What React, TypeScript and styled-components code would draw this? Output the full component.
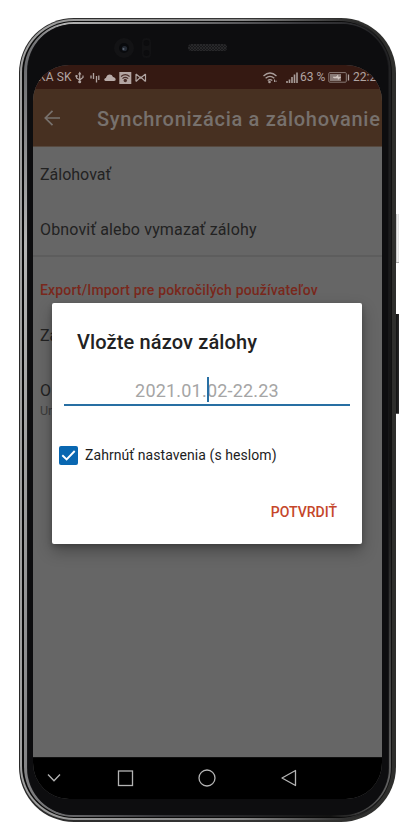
import React from 'react';
import styled, { createGlobalStyle } from 'styled-components';

const GlobalStyle = createGlobalStyle`
  * { box-sizing: border-box; }
  body { margin: 0; background: #fff; font-family: Roboto, sans-serif; }
`;

const Page = styled.main`
  display: flex;
  width: 420px;
  height: 830px;
  padding: 18px 0 0 19px;
  overflow: hidden;
  background: #fff;
`;

const Ring = styled.div<{ $fill: string; $pad: string; $radius: number }>`
  display: flex;
  flex: 1;
  min-width: 0;
  padding: ${(p) => p.$pad};
  border-radius: ${(p) => p.$radius}px;
  background: ${(p) => p.$fill};
`;

const Phone = styled.div`
  display: flex;
  flex: none;
  width: 377px;
  height: 804px;
`;

const SideButtons = styled.div`
  display: flex;
  flex-direction: column;
  gap: 51px;
  width: 3px;
  padding-top: 196px;
`;

const SideButton = styled.div<{ $fill: string; $h: number; $edge: string }>`
  height: ${(p) => p.$h}px;
  background: ${(p) => p.$fill};
  border-bottom: 1px solid ${(p) => p.$edge};
`;

const Face = styled.div`
  display: flex;
  flex-direction: column;
  flex: 1;
  min-width: 0;
  padding: 0 6px 16px 5px;
  border-radius: 46px;
  background: #0d0d0f;
`;

const Bezel = styled.div`
  display: flex;
  height: 41px;
  flex: none;
`;

const Screen = styled.div`
  position: relative;
  display: flex;
  flex-direction: column;
  width: 349px;
  height: 734px;
  border-radius: 36px;
  overflow: hidden;
  background: #666;
`;

const StatusBar = styled.div`
  display: flex;
  flex: none;
  align-items: center;
  height: 24px;
  padding-left: 5px;
  background: #351912;
  color: #b0a4a1;
  font-size: 12px;
  white-space: nowrap;
`;

const StatusText = styled.span<{ $w: number; $ls?: number }>`
  flex: none;
  width: ${(p) => p.$w}px;
  letter-spacing: ${(p) => p.$ls ?? 0}px;
`;

const StatusIcons = styled.svg`
  flex: none;
  display: block;
`;

const AppBar = styled.header`
  display: flex;
  flex: none;
  align-items: center;
  height: 58px;
  padding-left: 8px;
  background: #473021;
  color: #77716d;
  border-bottom: 1px solid #57493f;
`;

const Title = styled.h1`
  margin: 2px 0 0 34px;
  font-size: 20px;
  line-height: 24px;
  font-weight: 500;
  letter-spacing: 0.7px;
  white-space: nowrap;
`;

const Content = styled.section`
  display: flex;
  flex: 1;
  flex-direction: column;
`;

const Item = styled.div<{ $h: number }>`
  flex: none;
  height: ${(p) => p.$h}px;
  padding: 0 7px;
  font-size: 16px;
  line-height: 55px;
  color: #222;
  white-space: nowrap;
`;

const Long = styled.span`
  letter-spacing: 0.15px;
`;

const SectionHead = styled.h2`
  flex: none;
  height: 53px;
  margin: 0;
  padding: 0 7px;
  border-top: 2px solid #5d5d5d;
  font-size: 14px;
  line-height: 67px;
  font-weight: 500;
  letter-spacing: 0.16px;
  color: #79281c;
  white-space: nowrap;
`;

const Hint = styled.div`
  padding: 0 7px;
  font-size: 12.5px;
  line-height: 16px;
  color: #3c3c3c;
`;

const NavBar = styled.nav`
  flex: none;
  height: 42px;
  background: #000;
  border-top: 1px solid #111;
`;

const Dialog = styled.div`
  position: absolute;
  left: 19px;
  top: 238px;
  display: flex;
  flex-direction: column;
  width: 310px;
  height: 241px;
  padding: 26px 12px 0;
  border-radius: 2px;
  background: #fff;
  box-shadow: 0 7px 16px rgba(0, 0, 0, 0.3), 0 2px 5px rgba(0, 0, 0, 0.2);
`;

const DialogTitle = styled.h3`
  margin: 0;
  padding-left: 13px;
  font-size: 20px;
  line-height: 26px;
  font-weight: 500;
  letter-spacing: 0.13px;
  color: #222;
  white-space: nowrap;
`;

const Field = styled.div`
  display: flex;
  justify-content: center;
  height: 36px;
  margin: 15px 0 0;
  width: 286px;
  border-bottom: 2px solid #286fa3;
  font-size: 18px;
  line-height: 41px;
  color: #a5a5a5;
`;

const Placeholder = styled.span`
  position: relative;
  letter-spacing: 0.2px;
  white-space: nowrap;
`;

const Caret = styled.i`
  position: absolute;
  left: 72px;
  top: 7px;
  width: 2px;
  height: 25px;
  background: #286fa3;
`;

const Option = styled.label`
  display: flex;
  align-items: center;
  height: 20px;
  margin: 39px 0 0 -5px;
  gap: 7px;
  font-size: 14px;
  letter-spacing: 0.07px;
  color: #1d1d1d;
  white-space: nowrap;
`;

const CheckBox = styled.span`
  display: flex;
  flex: none;
  width: 19px;
  height: 19px;
  border-radius: 2px;
  background: #0967b1;
`;

const Confirm = styled.button`
  align-self: flex-end;
  margin: 37px 13px 0 0;
  padding: 0;
  border: 0;
  background: none;
  font: 500 14px/20px Roboto, sans-serif;
  color: #c5462a;
`;

function Metal({ children }: { children: React.ReactNode }) {
  return (
    <Ring $fill="linear-gradient(90deg,#292929,#353535 50%,#2e2e2c)" $pad="1px 4px 2px 1px" $radius={55}>
      <Ring $fill="linear-gradient(90deg,#a0a0a0,#888 60%,#111 98%)" $pad="2px 1px 2px 2px" $radius={54}>
        <Ring $fill="#090909" $pad="1px 0 1px 2px" $radius={52}>
          <Ring $fill="linear-gradient(100deg,#55565a,#b4b4b4 8%,#36363a 55%,#111 88%,#6d6d6d 100%)" $pad="2px 2px 2px 3px" $radius={50}>
            <Ring $fill="#161618" $pad="0 1px 0 1px" $radius={47}>{children}</Ring>
          </Ring>
        </Ring>
      </Ring>
    </Ring>
  );
}

export default function App() {
  return (
    <>
      <GlobalStyle />
      <Page>
        <Phone>
          <Metal>
            <Face>
              <Bezel>
                <svg width="349" height="41" viewBox="33 24 349 41">
                  <defs>
                    <pattern id="mesh" width="3" height="3" patternUnits="userSpaceOnUse">
                      <rect width="3" height="3" fill="#18181a" />
                      <path d="M0 0L3 3M3 0L0 3" stroke="#303032" strokeWidth=".6" />
                    </pattern>
                  </defs>
                  <circle cx="124" cy="48" r="10" fill="#131315" />
                  <circle cx="124" cy="48" r="5" fill="#090a0d" />
                  <circle cx="124.5" cy="48.5" r="2.6" fill="#252b35" />
                  <circle cx="123.500" cy="49" r="1" fill="#5c6573" />
                  <rect x="142" y="38" width="9" height="20" rx="4" fill="#121214" />
                  <circle cx="146.500" cy="43" r="3" fill="#0c0c0e" />
                  <circle cx="146.500" cy="53" r="3" fill="#0c0c0e" />
                  <rect x="188" y="44" width="39" height="7" rx="3.500" fill="url(#mesh)" />
                </svg>
              </Bezel>
              <Screen>
                <StatusBar>
                  <StatusText $w={36} $ls={0.15}>KA SK</StatusText>
                  <StatusIcons width="76" height="20" viewBox="74 67 76 20" fill="none" stroke="#b0a4a1">
                    <path d="M79.700 73V82M76.500 76V78L79.700 80L83 77.500V75.500" strokeWidth="1.200" />
                    <path d="M78 74.500L79.700 71.500L81.400 74.500Z" fill="#b0a4a1" stroke="none" />
                    <circle cx="79.700" cy="81.700" r="1.500" fill="#b0a4a1" stroke="none" />
                    <rect x="75.500" y="75" width="2" height="2" fill="#b0a4a1" stroke="none" />
                    <path d="M91 75.500V78.500M93.500 73V79M96.500 76V82.500M98.800 75.500V80" strokeWidth="1.300" />
                    <path d="M106.500 81C103.800 81 103.500 78.600 105.900 77.900C107 73.800 111.700 73.400 113 77C115.800 77 116.800 81 114 81Z" fill="#b8aba8" stroke="none" />
                    <rect x="119.300" y="72" width="12" height="12" fill="#b3a5a2" stroke="none" />
                    <path d="M121 76.500Q125.300 72.800 129.600 76.500M122.500 78.600Q125.300 76 128.200 78.600" stroke="#4b302b" strokeWidth="1.100" />
                    <circle cx="125.300" cy="80.500" r="1.700" fill="#4b302b" stroke="none" />
                    <path d="M136 74V81.500M145.500 74V81.500M136 74L140.700 78L145.500 74M136 81.500L140.700 77L145.500 81.500" strokeWidth="1.200" />
                  </StatusIcons>
                  <StatusIcons width="150" height="20" viewBox="150 67 150 20" fill="none" stroke="#a99d9a">
                    <path d="M263.500 76Q270 70 276.500 76M265.600 78.300Q270 74.400 274.300 78.300M267.700 80.500Q270 78.700 272.300 80.500" strokeWidth="1.300" />
                    <circle cx="269.500" cy="82" r="1.300" fill="#a99d9a" stroke="none" />
                    <path d="M274.500 82V79.500M276 80.500V82" strokeWidth="1" />
                    <path d="M287 83V81M289.500 83V79.500M292 83V77M294.500 83V74.500M297 83V72.500" strokeWidth="1.600" />
                  </StatusIcons>
                  <StatusText $w={27}>63 %</StatusText>
                  <StatusIcons width="26" height="20" viewBox="327 67 26 20" fill="none" stroke="#897a76">
                    <rect x="328.800" y="72.600" width="17.500" height="9.600" rx="1" />
                    <path d="M330 74H341V81H330Z" fill="#897a76" stroke="none" />
                    <path d="M333 77H336L338 75V77H341L338 79.500V78H334Z" fill="#d0c5c0" stroke="#d0c5c0" strokeWidth=".5" />
                    <path d="M348.500 74.500V80.500" strokeWidth="1.300" stroke="#b0a4a1" />
                  </StatusIcons>
                  <StatusText $w={34}>22:23</StatusText>
                </StatusBar>
                <AppBar>
                  <svg width="22" height="22" viewBox="41 107 22 22" fill="none" stroke="#77716d" strokeWidth="1.700">
                    <path d="M60 118H45.500M52.500 110.800L45.300 118L52.500 125.200" />
                  </svg>
                  <Title>Synchronizácia a zálohovanie</Title>
                </AppBar>
                <Content>
                  <Item $h={55}>Zálohovať</Item>
                  <Item $h={53}><Long>Obnoviť alebo vymazať zálohy</Long></Item>
                  <SectionHead>Export/Import pre pokročilých používateľov</SectionHead>
                  <Item $h={55}>Za</Item>
                  <Item $h={40}>O</Item>
                  <Hint>Ur</Hint>
                </Content>
                <NavBar>
                  <svg width="349" height="41" viewBox="33 758 349 41" fill="none" stroke="#b4b4b4" strokeWidth="1.300">
                    <path d="M48 774.500L54 780.800L60 774.500" />
                    <rect x="118.500" y="771" width="14" height="14.500" />
                    <circle cx="207" cy="778" r="8" />
                    <path d="M295.500 770.500V785.500L282 778Z" strokeLinejoin="round" />
                  </svg>
                </NavBar>
                <Dialog role="dialog">
                  <DialogTitle>Vložte názov zálohy</DialogTitle>
                  <Field><Placeholder>2021.01.02-22.23<Caret /></Placeholder></Field>
                  <Option>
                    <CheckBox>
                      <svg width="19" height="19" viewBox="0 0 19 19" fill="none" stroke="#fff" strokeWidth="1.900">
                        <path d="M3.300 9.200L7.600 13.400L15.700 5" />
                      </svg>
                    </CheckBox>
                    Zahrnúť nastavenia (s heslom)
                  </Option>
                  <Confirm>POTVRDIŤ</Confirm>
                </Dialog>
              </Screen>
            </Face>
          </Metal>
        </Phone>
        <SideButtons>
          <SideButton $fill="linear-gradient(90deg,#bbb,#eee 50%,#ddd)" $h={49} $edge="#aaa" />
          <SideButton $fill="linear-gradient(90deg,#111,#292929)" $h={100} $edge="#555" />
        </SideButtons>
      </Page>
    </>
  );
}
